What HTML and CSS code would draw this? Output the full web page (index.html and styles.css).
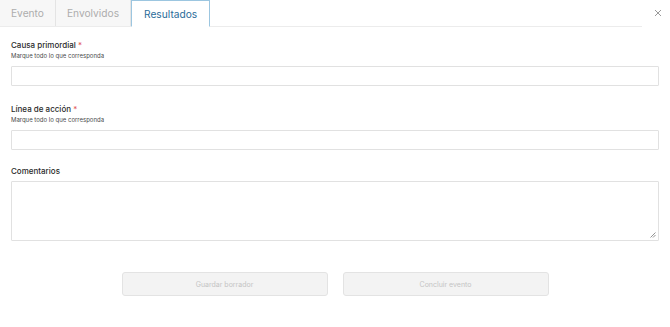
FILE: index.html
```html
<!DOCTYPE html>
<html lang="es">
<head>
<meta charset="utf-8">
<link rel="stylesheet" href="styles.css">
</head>
<body>
<div class="modal">
  <div class="header">
    <div class="tabs">
      <div class="tab">Evento</div>
      <div class="tab">Envolvidos</div>
      <div class="tab active">Resultados</div>
    </div>
    <button class="close" aria-label="Cerrar">
      <svg width="8" height="8" viewBox="0 0 8 8"><path d="M1 1L7 7M7 1L1 7" stroke="#9a9a9a" stroke-width="1"/></svg>
    </button>
  </div>
  <form class="form">
    <div class="field">
      <label class="label">Causa primordial <span class="req">*</span></label>
      <div class="hint">Marque todo lo que corresponda</div>
      <div class="input"></div>
    </div>
    <div class="field">
      <label class="label">Línea de acción <span class="req">*</span></label>
      <div class="hint">Marque todo lo que corresponda</div>
      <div class="input"></div>
    </div>
    <div class="field">
      <label class="label">Comentarios</label>
      <div class="textarea">
        <svg class="grip" width="7" height="7" viewBox="0 0 7 7"><path d="M6.5 1.5L1.5 6.5M6.5 4L4 6.5" stroke="#888" stroke-width="0.9"/></svg>
      </div>
    </div>
    <div class="actions">
      <button type="button" class="btn">Guardar borrador</button>
      <button type="button" class="btn">Concluir evento</button>
    </div>
  </form>
</div>
</body>
</html>
```
FILE: styles.css
```css
* { box-sizing: border-box; }
html, body { margin: 0; padding: 0; background: #fff; }
body { font-family: Inter, "Noto Sans", sans-serif; color: #333; width: 670px; height: 327px; overflow: hidden; }
.modal { width: 670px; }
.header { display: flex; align-items: stretch; justify-content: space-between; height: 27px; }
.tabs { display: flex; flex: 1; border-bottom: 1px solid #ececec; margin-right: 10px; }
.tab { height: 26px; display: flex; align-items: center; font-size: 10.2px; color: #adadad; background: #f7f7f7; border-right: 1px solid #e4e4e4; padding: 0 11px; margin-bottom: -1px; }
.tab.active { background: #fff; color: #2a6c99; border: 1px solid #9cc6e0; border-bottom-color: #fff; padding: 0 12px; height: 27px; }
.close { border: 0; background: none; padding: 0; width: 12px; height: 26px; display: flex; align-items: center; justify-content: center; margin-right: 6px; }
.form { padding: 12px 11px 0 11px; }
.label { display: block; font-size: 8px; font-weight: 500; color: #2a2a2a; line-height: 12px; }
.req { color: #e25555; font-weight: 400; }
.hint { font-size: 6px; color: #4a4a4a; line-height: 8px; margin-top: 1px; }
.input { height: 20px; border: 1px solid #e1e1e1; border-radius: 1px; margin-top: 6px; margin-bottom: 17px; }
.field:nth-child(2) .input { margin-bottom: 15px; }
.textarea { position: relative; height: 60px; border: 1px solid #e1e1e1; border-radius: 1px; margin-top: 4px; }
.grip { position: absolute; right: 2px; bottom: 2px; }
.actions { display: flex; justify-content: center; gap: 15px; margin-top: 31px; }
.btn { width: 206px; height: 24px; background: #f3f3f3; border: 1px solid #e3e3e3; border-radius: 3px; font-family: Inter, "Noto Sans", sans-serif; font-size: 7px; color: #c4c4c4; }
```
